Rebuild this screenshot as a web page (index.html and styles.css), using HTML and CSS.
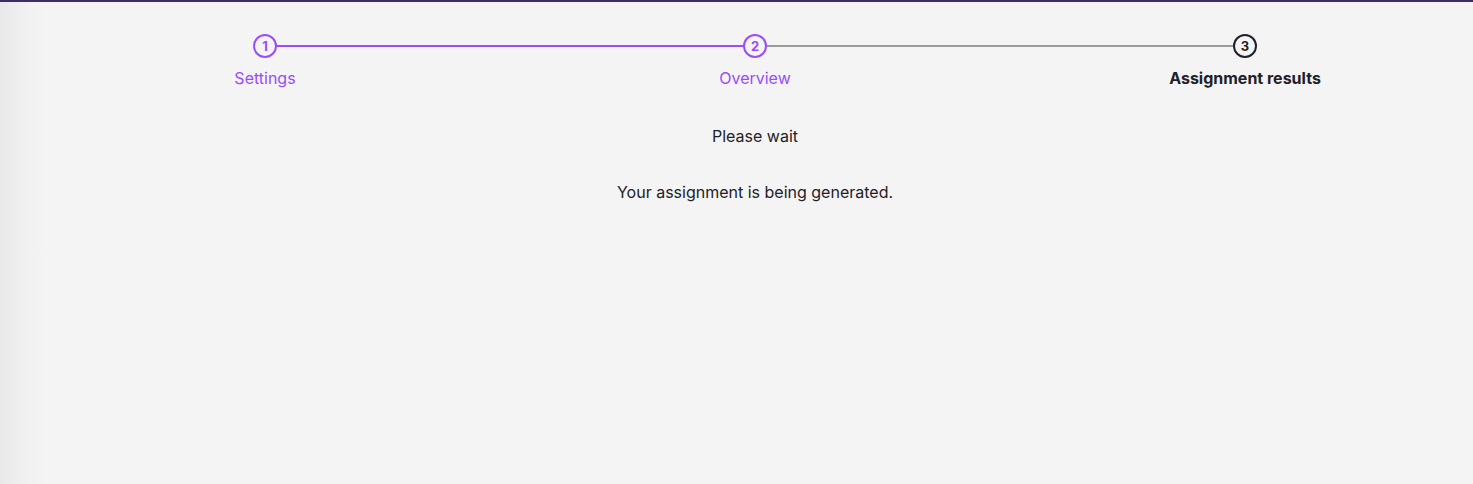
FILE: index.html
```html
<!DOCTYPE html>
<html lang="en">
<head>
    <meta charset="UTF-8">
    <meta name="viewport" content="width=device-width, initial-scale=1.0">
    <title>Assignment results</title>
    <link rel="stylesheet" href="styles.css">
</head>
<body>
    <div class="topbar"></div>
    <main class="content">
        <div class="stepper">
            <div class="step done">
                <span class="step-dot">1</span>
                <span class="step-label">Settings</span>
            </div>
            <div class="connector done"></div>
            <div class="step done">
                <span class="step-dot">2</span>
                <span class="step-label">Overview</span>
            </div>
            <div class="connector"></div>
            <div class="step current">
                <span class="step-dot">3</span>
                <span class="step-label">Assignment results</span>
            </div>
        </div>

        <p class="status-title">Please wait</p>
        <p class="status-text">Your assignment is being generated.</p>
    </main>
</body>
</html>
```

FILE: styles.css
```css
body {
    margin: 0;
    font-family: Inter, "Noto Sans", sans-serif;
    background: linear-gradient(90deg, #e8e8e8 0, #f0f0f0 22px, #f4f4f4 46px) #f4f4f4;
    color: #1f2128;
    height: 484px;
    overflow: hidden;
}
.topbar {
    height: 2px;
    background-color: #3d2c6b;
}
.content {
    padding-left: 37px;
    display: flex;
    flex-direction: column;
    align-items: center;
}
.stepper {
    display: flex;
    align-items: flex-start;
    margin-top: 32px;
}
.step {
    width: 160px;
    display: flex;
    flex-direction: column;
    align-items: center;
    position: relative;
    z-index: 1;
}
.step-dot {
    width: 20px;
    height: 20px;
    border: 2px solid #1f2128;
    border-radius: 50%;
    display: flex;
    align-items: center;
    justify-content: center;
    font-size: 13px;
    font-weight: 700;
    background-color: #f4f4f4;
}
.step-label {
    margin-top: 10px;
    font-size: 16px;
    line-height: 20px;
}
.step.done .step-dot {
    border-color: #9a4cff;
    color: #9a4cff;
}
.step.done .step-label {
    color: #9a4cff;
}
.step.current .step-label {
    font-weight: 700;
}
.connector {
    width: 466px;
    height: 2px;
    margin: 11px -68px 0;
    background-color: #9a9a9a;
}
.connector.done {
    background-color: #9a4cff;
}
.status-title {
    margin: 38px 0 0;
    font-size: 16px;
    line-height: 20px;
}
.status-text {
    margin: 36px 0 0;
    font-size: 16px;
    line-height: 20px;
}
```
